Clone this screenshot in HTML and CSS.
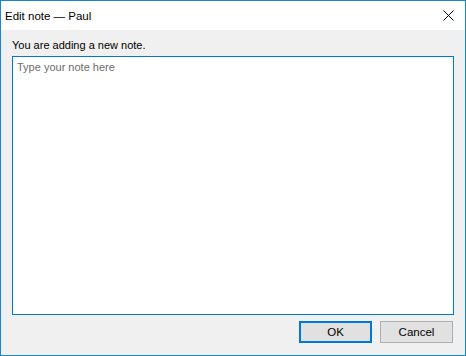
FILE: index.html
```html
<!DOCTYPE html>
<html lang="en">
<head>
  <meta charset="UTF-8" />
  <meta name="viewport" content="width=device-width, initial-scale=1.0" />
  <title>Edit note — Paul</title>
  <link rel="stylesheet" href="styles.css">
</head>
<body>
  <div class="window">
    <div class="titlebar">
      <span class="title">Edit note — Paul</span>
      <button class="close" title="Close">
        <svg width="11" height="11" viewBox="0 0 11 11">
          <path d="M0.5 0.5 L10.5 10.5 M10.5 0.5 L0.5 10.5" stroke="#000" stroke-width="1" fill="none" />
        </svg>
      </button>
    </div>

    <div class="content">
      <label class="hint" for="note">You are adding a new note.</label>
      <textarea id="note" class="note" placeholder="Type your note here"></textarea>

      <div class="actions">
        <button class="btn default">OK</button>
        <button class="btn">Cancel</button>
      </div>
    </div>
  </div>
</body>
</html>
```

FILE: styles.css
```css
* { box-sizing: border-box; }
body { margin: 0; font-family: "Liberation Sans", Arial, sans-serif; font-size: 11px; color: #000; }

.window {
  width: 466px; height: 356px; border: 1px solid #1883d7; background: #f0f0f0;
  display: flex; flex-direction: column;
}

.titlebar {
  height: 29px; background: #fff; display: flex; align-items: center;
  padding-left: 4px;
}
.title { flex: 1; font-size: 11.5px; }
.close {
  width: 46px; height: 29px; border: none; background: transparent; padding: 0;
  display: flex; align-items: center; justify-content: center;
}
.close svg { margin-left: 12px; margin-top: -1px; }

.content {
  flex: 1; display: flex; flex-direction: column; padding: 7px 11px 12px 11px;
}
.hint { display: block; line-height: 16px; }
.note {
  margin-top: 3px; height: 259px; width: 442px; resize: none;
  border: 1px solid #0078d7; outline: none; background: #fff;
  font-family: inherit; font-size: 11px; padding: 4px 4px;
}
.note::placeholder { color: #6d6d6d; }

.actions { display: flex; justify-content: flex-end; gap: 8px; margin-top: 6px; padding-right: 1px; }
.btn {
  width: 73px; height: 22px; font-family: inherit; font-size: 11.5px; color: #000;
  background: #e1e1e1; border: 1px solid #adadad; padding: 0;
}
.btn.default { border: 2px solid #0078d7; }
```
